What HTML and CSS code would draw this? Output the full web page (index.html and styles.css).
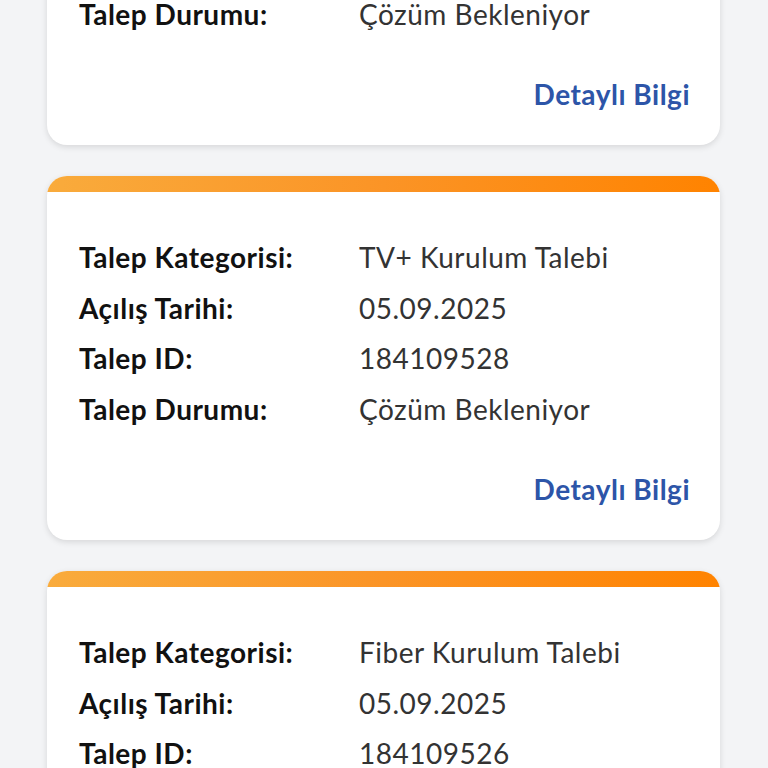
FILE: index.html
```html
<!DOCTYPE html>
<html lang="tr">
<head>
<meta charset="utf-8">
<link rel="stylesheet" href="styles.css">
</head>
<body>
<div class="list">
  <div class="card">
    <div class="bar"></div>
    <div class="body">
      <div class="row"><span class="label">Talep Kategorisi:</span><span class="value">Fiber Kurulum Talebi</span></div>
      <div class="row"><span class="label">Açılış Tarihi:</span><span class="value">05.09.2025</span></div>
      <div class="row"><span class="label">Talep ID:</span><span class="value">184109530</span></div>
      <div class="row"><span class="label">Talep Durumu:</span><span class="value">Çözüm Bekleniyor</span></div>
      <div class="more"><a class="link">Detaylı Bilgi</a></div>
    </div>
  </div>
  <div class="card">
    <div class="bar"></div>
    <div class="body">
      <div class="row"><span class="label">Talep Kategorisi:</span><span class="value">TV+ Kurulum Talebi</span></div>
      <div class="row"><span class="label">Açılış Tarihi:</span><span class="value">05.09.2025</span></div>
      <div class="row"><span class="label">Talep ID:</span><span class="value">184109528</span></div>
      <div class="row"><span class="label">Talep Durumu:</span><span class="value">Çözüm Bekleniyor</span></div>
      <div class="more"><a class="link">Detaylı Bilgi</a></div>
    </div>
  </div>
  <div class="card">
    <div class="bar"></div>
    <div class="body">
      <div class="row"><span class="label">Talep Kategorisi:</span><span class="value">Fiber Kurulum Talebi</span></div>
      <div class="row"><span class="label">Açılış Tarihi:</span><span class="value">05.09.2025</span></div>
      <div class="row"><span class="label">Talep ID:</span><span class="value">184109526</span></div>
      <div class="row"><span class="label">Talep Durumu:</span><span class="value">Çözüm Bekleniyor</span></div>
      <div class="more"><a class="link">Detaylı Bilgi</a></div>
    </div>
  </div>
</div>
</body>
</html>
```
FILE: styles.css
```css
html, body {
  margin: 0;
  padding: 0;
  background: #f3f4f6;
  height: 768px;
  overflow: hidden;
}
body {
  font-family: "Lato", "Noto Sans", sans-serif;
}
.list {
  display: flex;
  flex-direction: column;
  gap: 31px;
  margin: -219px 48px 0 47px;
}
.card {
  background: #fff;
  border-radius: 20px;
  overflow: hidden;
  box-shadow: 0 2px 6px rgba(0,0,0,0.12);
  height: 364px;
  flex: none;
}
.bar {
  height: 16px;
  background: linear-gradient(90deg, #f9ab3c 0%, #fb9426 50%, #ff8300 100%);
}
.body {
  padding: 40px 30px 0 32px;
}
.row {
  display: flex;
  height: 50.5px;
  align-items: center;
  font-size: 28px;
  letter-spacing: 0.5px;
}
.label {
  width: 280px;
  font-weight: 700;
  color: #111;
}
.value {
  color: #333;
}
.more {
  display: flex;
  justify-content: flex-end;
}
.link {
  margin-top: 41px;
  color: #2d55a8;
  font-weight: 700;
  font-size: 28px;
  letter-spacing: 0.5px;
  line-height: 28px;
}
```
